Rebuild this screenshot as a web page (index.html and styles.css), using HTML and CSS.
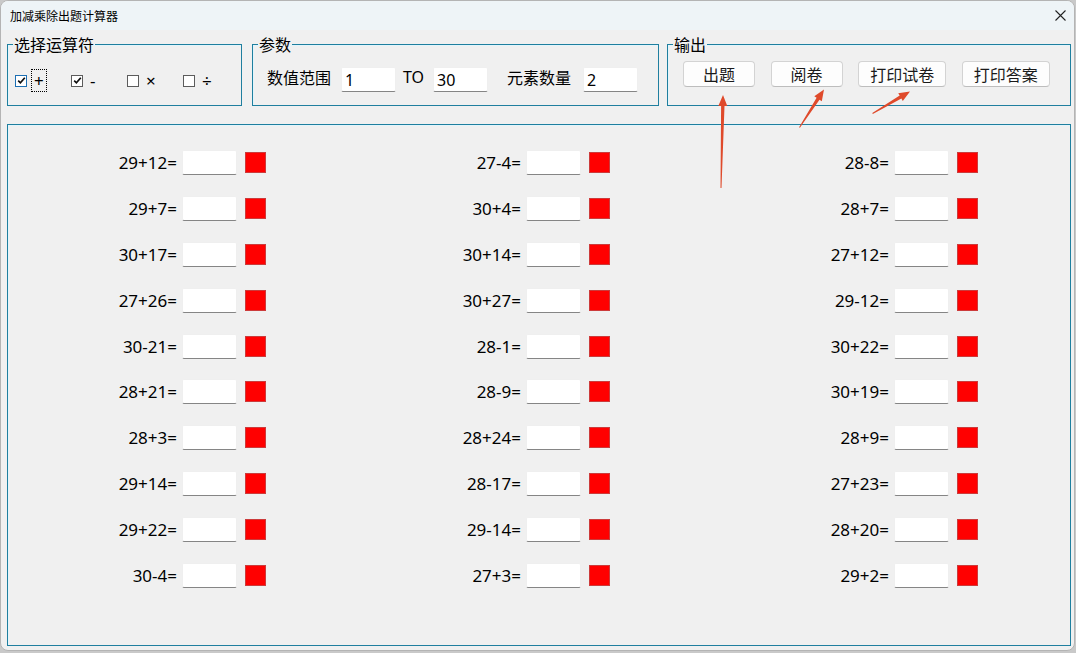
FILE: index.html
```html
<!DOCTYPE html>
<html lang="zh-CN">
<head>
    <meta charset="UTF-8">
    <title>加减乘除出题计算器</title>
    <link rel="stylesheet" href="styles.css">
</head>
<body>
    <div class="window">
        <div class="titlebar">
            <span class="title">加减乘除出题计算器</span>
            <span class="close">
                <svg width="11" height="11" viewBox="0 0 11 11"><path d="M0.5 0.5L10.5 10.5M10.5 0.5L0.5 10.5" stroke="#222" stroke-width="1.1" fill="none"/></svg>
            </span>
        </div>

        <div class="client">
            <div class="groups">
                <fieldset class="group group-ops">
                    <legend>选择运算符</legend>
                    <div class="group-body ops">
                        <label class="op">
                            <span class="box focused"><svg width="9" height="9" viewBox="0 0 9 9"><path d="M1.2 4.6L3.4 6.8L7.8 1.8" stroke="#111" stroke-width="1.7" fill="none"/></svg></span>
                            <span class="op-text has-focus">+</span>
                        </label>
                        <label class="op">
                            <span class="box"><svg width="9" height="9" viewBox="0 0 9 9"><path d="M1.2 4.6L3.4 6.8L7.8 1.8" stroke="#111" stroke-width="1.7" fill="none"/></svg></span>
                            <span class="op-text">-</span>
                        </label>
                        <label class="op">
                            <span class="box"></span>
                            <span class="op-text">×</span>
                        </label>
                        <label class="op">
                            <span class="box"></span>
                            <span class="op-text">÷</span>
                        </label>
                    </div>
                </fieldset>

                <fieldset class="group group-params">
                    <legend>参数</legend>
                    <div class="group-body params">
                        <span class="param-label">数值范围</span>
                        <input class="field range-from" type="text" value="1">
                        <span class="param-to">TO</span>
                        <input class="field range-to" type="text" value="30">
                        <span class="param-label count-label">元素数量</span>
                        <input class="field count" type="text" value="2">
                    </div>
                </fieldset>

                <fieldset class="group group-output">
                    <legend>输出</legend>
                    <div class="group-body actions">
                        <button class="btn">出题</button>
                        <button class="btn">阅卷</button>
                        <button class="btn btn-wide">打印试卷</button>
                        <button class="btn btn-wide">打印答案</button>
                    </div>
                </fieldset>
            </div>

            <div class="panel">
                <div class="quiz">
                    <!-- column 1 -->
                    <div class="item"><span class="expr">29+12=</span><input class="field answer" type="text"><span class="mark"></span></div>
                    <div class="item"><span class="expr">29+7=</span><input class="field answer" type="text"><span class="mark"></span></div>
                    <div class="item"><span class="expr">30+17=</span><input class="field answer" type="text"><span class="mark"></span></div>
                    <div class="item"><span class="expr">27+26=</span><input class="field answer" type="text"><span class="mark"></span></div>
                    <div class="item"><span class="expr">30-21=</span><input class="field answer" type="text"><span class="mark"></span></div>
                    <div class="item"><span class="expr">28+21=</span><input class="field answer" type="text"><span class="mark"></span></div>
                    <div class="item"><span class="expr">28+3=</span><input class="field answer" type="text"><span class="mark"></span></div>
                    <div class="item"><span class="expr">29+14=</span><input class="field answer" type="text"><span class="mark"></span></div>
                    <div class="item"><span class="expr">29+22=</span><input class="field answer" type="text"><span class="mark"></span></div>
                    <div class="item"><span class="expr">30-4=</span><input class="field answer" type="text"><span class="mark"></span></div>
                    <!-- column 2 -->
                    <div class="item"><span class="expr">27-4=</span><input class="field answer" type="text"><span class="mark"></span></div>
                    <div class="item"><span class="expr">30+4=</span><input class="field answer" type="text"><span class="mark"></span></div>
                    <div class="item"><span class="expr">30+14=</span><input class="field answer" type="text"><span class="mark"></span></div>
                    <div class="item"><span class="expr">30+27=</span><input class="field answer" type="text"><span class="mark"></span></div>
                    <div class="item"><span class="expr">28-1=</span><input class="field answer" type="text"><span class="mark"></span></div>
                    <div class="item"><span class="expr">28-9=</span><input class="field answer" type="text"><span class="mark"></span></div>
                    <div class="item"><span class="expr">28+24=</span><input class="field answer" type="text"><span class="mark"></span></div>
                    <div class="item"><span class="expr">28-17=</span><input class="field answer" type="text"><span class="mark"></span></div>
                    <div class="item"><span class="expr">29-14=</span><input class="field answer" type="text"><span class="mark"></span></div>
                    <div class="item"><span class="expr">27+3=</span><input class="field answer" type="text"><span class="mark"></span></div>
                    <!-- column 3 -->
                    <div class="item"><span class="expr">28-8=</span><input class="field answer" type="text"><span class="mark"></span></div>
                    <div class="item"><span class="expr">28+7=</span><input class="field answer" type="text"><span class="mark"></span></div>
                    <div class="item"><span class="expr">27+12=</span><input class="field answer" type="text"><span class="mark"></span></div>
                    <div class="item"><span class="expr">29-12=</span><input class="field answer" type="text"><span class="mark"></span></div>
                    <div class="item"><span class="expr">30+22=</span><input class="field answer" type="text"><span class="mark"></span></div>
                    <div class="item"><span class="expr">30+19=</span><input class="field answer" type="text"><span class="mark"></span></div>
                    <div class="item"><span class="expr">28+9=</span><input class="field answer" type="text"><span class="mark"></span></div>
                    <div class="item"><span class="expr">27+23=</span><input class="field answer" type="text"><span class="mark"></span></div>
                    <div class="item"><span class="expr">28+20=</span><input class="field answer" type="text"><span class="mark"></span></div>
                    <div class="item"><span class="expr">29+2=</span><input class="field answer" type="text"><span class="mark"></span></div>
                </div>
            </div>
        </div>

        <!-- annotation arrows drawn over the screenshot -->
        <svg class="arrows" width="1076" height="653" viewBox="0 0 1076 653">
            <polygon points="721.5,188 724.5,106 727.3,106.1 723,95 718.3,105.9 721.1,106 720.5,188"/>
            <polygon points="799.9,127.8 819.5,99.7 821.8,101.2 824,89.5 814.3,96.3 816.6,97.8 799.1,127.2"/>
            <polygon points="872.8,113.9 901.4,98.5 902.8,101 910,91.5 898.2,93.2 899.7,95.6 872.3,113.1"/>
        </svg>
    </div>
</body>
</html>
```

FILE: styles.css
```css
body {
    margin: 0;
    background: #c9c9c9;
    font-family: "Noto Sans", "Noto Sans CJK SC", sans-serif;
    color: #000;
}
.window {
    position: relative;
    box-sizing: border-box;
    width: 1075px;
    height: 651px;
    border: 1px solid #b4b4b4;
    border-radius: 8px;
    overflow: hidden;
    background: #f0f0f0;
}
.titlebar {
    display: flex;
    align-items: center;
    height: 29px;
    padding-left: 9px;
    background: #eef4f7;
}
.title {
    font-size: 12px;
    font-family: "Noto Sans CJK SC", sans-serif;
}
.close {
    display: flex;
    margin-left: auto;
    margin-right: 8px;
}
.client {
    padding: 0 3px 0 6px;
}
.groups {
    display: flex;
}
.group {
    margin: 5px 0 0;
    padding: 0;
    min-width: 0;
    border: 1px solid #1f7f9f;
    box-shadow: inset 1px 1px 0 #e2f5fc;
}
.group legend {
    margin-left: 5px;
    padding: 0 1px;
    font-size: 16px;
    line-height: 18px;
    font-family: "Noto Sans CJK SC", sans-serif;
}
.group-ops {
    width: 235px;
    box-sizing: border-box;
}
.group-params {
    width: 407px;
    box-sizing: border-box;
    margin-left: 10px;
}
.group-output {
    width: 404px;
    box-sizing: border-box;
    margin-left: 8px;
}
.group-body {
    box-sizing: border-box;
    height: 52px;
    display: flex;
    align-items: flex-start;
}

/* operator checkboxes */
.ops {
    display: grid;
    grid-template-columns: repeat(4, 56px);
    padding: 16px 0 0 7px;
}
.op {
    display: flex;
    align-items: center;
    height: 23px;
}
.box {
    box-sizing: border-box;
    width: 12px;
    height: 12px;
    border: 1px solid #5c5c5c;
    background: #fff;
    display: flex;
    align-items: center;
    justify-content: center;
}
.box.focused {
    border-color: #1c6fb3;
}
.op-text {
    margin-left: 4px;
    padding: 0 2px;
    height: 21px;
    line-height: 21px;
    font-size: 17px;
    border: 1px dotted transparent;
}
.op-text.has-focus {
    border-color: #000;
}

/* parameters */
.params {
    align-items: center;
    padding: 14px 0 13px 14px;
    font-size: 16px;
}
.param-label,
.param-to {
    margin-bottom: 6px;
}
.param-label {
    font-family: "Noto Sans CJK SC", sans-serif;
}
.param-to {
    margin-left: 7px;
}
.field {
    box-sizing: border-box;
    width: 55px;
    height: 25px;
    padding: 0 3px;
    border: 1px solid #efefef;
    border-bottom-color: #858585;
    border-radius: 2px;
    background: #fff;
    font-family: "Noto Sans", sans-serif;
    font-size: 16px;
    color: #000;
    outline: none;
}
.range-from {
    margin-left: 10px;
}
.range-to {
    margin-left: 9px;
}
.count-label {
    margin-left: 19px;
}
.count {
    margin-left: 12px;
}

/* output buttons */
.actions {
    padding: 8px 0 0 15px;
    column-gap: 15.6px;
}
.btn {
    box-sizing: border-box;
    width: 72px;
    height: 26px;
    padding: 0;
    border: 1px solid #d3d3d3;
    border-bottom-color: #bdbdbd;
    border-radius: 4px;
    background: #fdfdfd;
    font-family: "Noto Sans CJK SC", sans-serif;
    font-size: 16px;
    color: #1a1a1a;
}
.btn-wide {
    width: 88px;
}

/* question panel */
.panel {
    box-sizing: border-box;
    height: 522px;
    margin-top: 18px;
    padding: 25px 0 0 69px;
    border: 1px solid #1f7f9f;
    box-shadow: inset 1px 1px 0 #e2f5fc;
}
.quiz {
    display: grid;
    grid-template-columns: 344px 368px 1fr;
    grid-template-rows: repeat(10, 25px);
    grid-auto-flow: column;
    row-gap: 20.9px;
}
.item {
    display: flex;
    align-items: center;
}
.expr {
    width: 100px;
    margin-right: 5px;
    text-align: right;
    font-size: 17px;
}
.mark {
    box-sizing: border-box;
    width: 21px;
    height: 21px;
    margin-left: 8px;
    background: #ff0000;
    border: 1px solid #cc3b3b;
}

.arrows {
    position: absolute;
    left: -1px;
    top: -1px;
    pointer-events: none;
}
.arrows polygon {
    fill: #df4a2b;
}
```
